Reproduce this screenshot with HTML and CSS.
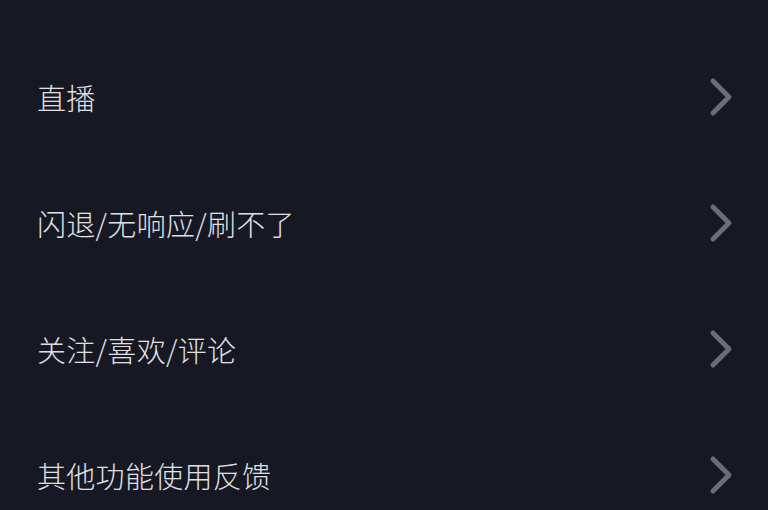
FILE: index.html
```html
<!DOCTYPE html>
<html lang="zh">
<head>
<meta charset="utf-8">
<link rel="stylesheet" href="styles.css">
</head>
<body>
<ul class="menu">
  <li class="item"><span class="label">直播</span><svg class="chev" viewBox="0 0 26 40" width="26" height="40"><polyline points="5,4 21,20 5,36"/></svg></li>
  <li class="item"><span class="label">闪退/无响应/刷不了</span><svg class="chev" viewBox="0 0 26 40" width="26" height="40"><polyline points="5,4 21,20 5,36"/></svg></li>
  <li class="item"><span class="label">关注/喜欢/评论</span><svg class="chev" viewBox="0 0 26 40" width="26" height="40"><polyline points="5,4 21,20 5,36"/></svg></li>
  <li class="item"><span class="label">其他功能使用反馈</span><svg class="chev" viewBox="0 0 26 40" width="26" height="40"><polyline points="5,4 21,20 5,36"/></svg></li>
</ul>
</body>
</html>
```
FILE: styles.css
```css
html, body {
  margin: 0;
  padding: 0;
  background: #161823;
  height: 100%;
  overflow: hidden;
}
.menu {
  list-style: none;
  margin: 0;
  padding: 34px 0 0 0;
}
.item {
  height: 126px;
  display: flex;
  align-items: center;
  justify-content: space-between;
  padding: 0 34px 0 37px;
}
.label {
  font-family: "Noto Sans CJK SC", "Noto Sans", sans-serif;
  font-size: 29px;
  font-weight: 300;
  letter-spacing: 0.3px;
  color: #e0e0e3;
  line-height: 1;
}
.chev {
  display: block;
}
.chev polyline {
  fill: none;
  stroke: #6c6d74;
  stroke-width: 5;
  stroke-linecap: round;
  stroke-linejoin: round;
}
```
